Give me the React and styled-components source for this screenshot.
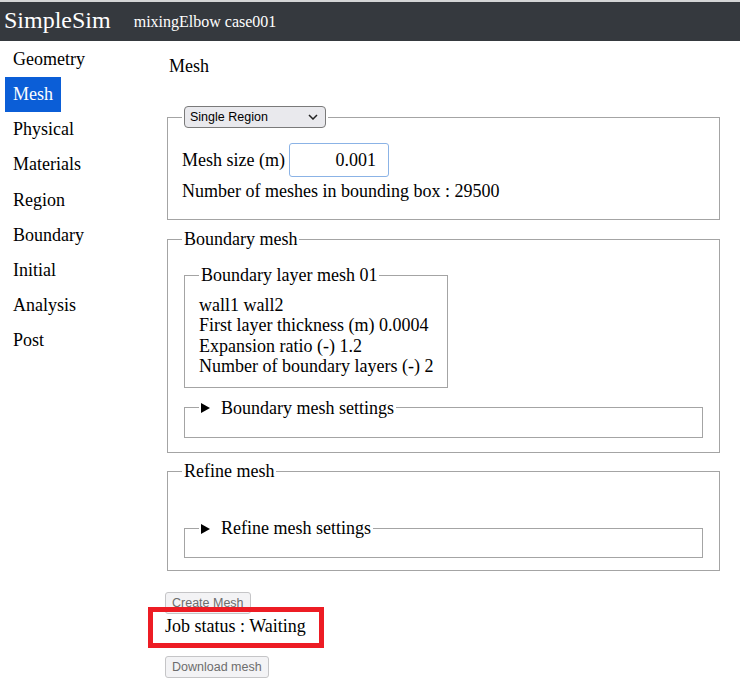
import React from "react";
import styled, { createGlobalStyle } from "styled-components";

const GlobalStyle = createGlobalStyle`
  body {
    margin: 0;
    font-family: "Liberation Serif", "Times New Roman", serif;
    font-size: 18px;
    color: #000;
    background: #fff;
  }
`;

const menu = [
  "Geometry",
  "Mesh",
  "Physical",
  "Materials",
  "Region",
  "Boundary",
  "Initial",
  "Analysis",
  "Post",
];

const App = () => {
  return (
    <>
      <GlobalStyle />
      <Header>
        <Brand>SimpleSim</Brand>
        <CaseName>mixingElbow case001</CaseName>
      </Header>
      <Layout>
        <Sidebar>
          {menu.map((item) => (
            <NavItem key={item} active={item === "Mesh"}>
              {item}
            </NavItem>
          ))}
        </Sidebar>
        <Main>
          <Title>Mesh</Title>

          <Fieldset pb={18} mb={9}>
            <Legend>
              <SelectWrap>
                <Select defaultValue="single">
                  <option value="single">Single Region</option>
                  <option value="multi">Multi Region</option>
                </Select>
                <Chevron viewBox="0 0 10 6" width="10" height="6">
                  <path d="M1 1l4 4 4-4" fill="none" stroke="#222" strokeWidth="1.5" />
                </Chevron>
              </SelectWrap>
            </Legend>
            <SizeRow>
              Mesh size (m) <NumberInput defaultValue="0.001" />
            </SizeRow>
            <Line gap>Number of meshes in bounding box : 29500</Line>
          </Fieldset>

          <Fieldset pb={14}>
            <Legend>Boundary mesh</Legend>
            <InnerFieldset>
              <Legend>Boundary layer mesh 01</Legend>
              <Line>wall1 wall2</Line>
              <Line>First layer thickness (m) 0.0004</Line>
              <Line>Expansion ratio (-) 1.2</Line>
              <Line>Number of boundary layers (-) 2</Line>
            </InnerFieldset>
            <SettingsFieldset>
              <Legend>
                <Summary>
                  <Triangle />
                  Boundary mesh settings
                </Summary>
              </Legend>
            </SettingsFieldset>
          </Fieldset>

          <Fieldset pb={12}>
            <Legend>Refine mesh</Legend>
            <Spacer />
            <SettingsFieldset>
              <Legend>
                <Summary>
                  <Triangle />
                  Refine mesh settings
                </Summary>
              </Legend>
            </SettingsFieldset>
          </Fieldset>

          <Actions>
            <Button disabled>Create Mesh</Button>
            <Status>
              Job status : Waiting
              <Highlight />
            </Status>
            <Button disabled>Download mesh</Button>
          </Actions>
        </Main>
      </Layout>
    </>
  );
};

export default App;

const Header = styled.header`
  display: flex;
  align-items: center;
  height: 39px;
  border-top: 2px solid #d4d5d6;
  background-color: #35393e;
  color: #fff;
  padding-left: 4px;
`;

const Brand = styled.div`
  font-size: 24px;
  margin-top: -2px;
`;

const CaseName = styled.div`
  font-size: 16px;
  margin-left: 23px;
`;

const Layout = styled.div`
  display: flex;
`;

const Sidebar = styled.nav`
  width: 160px;
  padding: 1px 0 0 5px;
  display: flex;
  flex-direction: column;
  align-items: flex-start;
`;

const NavItem = styled.div`
  padding: 7px 8px;
  line-height: 21.13px;
  background-color: ${(p) => (p.active ? "#0b5ed7" : "transparent")};
  color: ${(p) => (p.active ? "#fff" : "#000")};
  cursor: pointer;
`;

const Main = styled.main`
  flex: 1;
  padding: 15px 18px 0 0;
`;

const Title = styled.div`
  line-height: 21px;
  padding-left: 4px;
  margin-bottom: 29px;
`;

const Fieldset = styled.fieldset`
  margin: 0 2px ${(p) => (p.mb ? `${p.mb}px` : "8px")};
  padding: 0 14px ${(p) => (p.pb ? `${p.pb}px` : "11px")};
  border: 1px solid #a4a4a4;
`;

const InnerFieldset = styled(Fieldset)`
  width: fit-content;
  margin: 15px 2px 0;
  padding-top: 9px;
  padding-bottom: 11px;
`;

const SettingsFieldset = styled(Fieldset)`
  margin: 9px 2px 0;
  padding-bottom: 18px;
`;

const Legend = styled.legend`
  padding: 0 2px;
  line-height: 21px;
`;

const SelectWrap = styled.span`
  position: relative;
  display: inline-block;
  vertical-align: top;
`;

const Select = styled.select`
  appearance: none;
  width: 142px;
  height: 22px;
  padding: 0 0 0 5px;
  border: 1px solid #7a7a7a;
  border-radius: 4px;
  background-color: #e9e9ed;
  font-family: "Liberation Sans", Arial, sans-serif;
  font-size: 12.5px;
  color: #000;
  display: block;
`;

const Chevron = styled.svg`
  position: absolute;
  right: 8px;
  top: 8px;
  pointer-events: none;
`;

const SizeRow = styled.div`
  margin-top: 15px;
  display: flex;
  align-items: center;
  gap: 4px;
  line-height: 21px;
`;

const NumberInput = styled.input`
  width: 100px;
  height: 34px;
  box-sizing: border-box;
  border: 1px solid #8bb3e6;
  border-radius: 3px;
  padding: 0 12px 0 4px;
  font-family: inherit;
  font-size: 18px;
  text-align: right;
  outline: none;
`;

const Line = styled.div`
  line-height: 20.2px;
  margin-top: ${(p) => (p.gap ? "4px" : "0")};
`;

const Summary = styled.span`
  display: inline-flex;
  align-items: center;
`;

const Triangle = styled.span`
  width: 0;
  height: 0;
  border-top: 5px solid transparent;
  border-bottom: 5px solid transparent;
  border-left: 9px solid #000;
  margin-right: 11px;
`;

const Spacer = styled.div`
  height: 27px;
`;

const Actions = styled.div`
  padding-top: 13px;
  display: flex;
  flex-direction: column;
  align-items: flex-start;
`;

const Button = styled.button`
  font-family: "Liberation Sans", Arial, sans-serif;
  font-size: 12.5px;
  line-height: 16px;
  padding: 2px 6px;
  color: #6d6d6d;
  background-color: #f3f3f5;
  border: 1px solid #c5c5c7;
  border-radius: 3px;
`;

const Status = styled.div`
  position: relative;
  line-height: 21px;
  margin: 2px 0 19px;
`;

const Highlight = styled.span`
  position: absolute;
  left: -17px;
  top: -9px;
  width: 176px;
  height: 41px;
  box-sizing: border-box;
  border: 5px solid #ed1c24;
  pointer-events: none;
`;
